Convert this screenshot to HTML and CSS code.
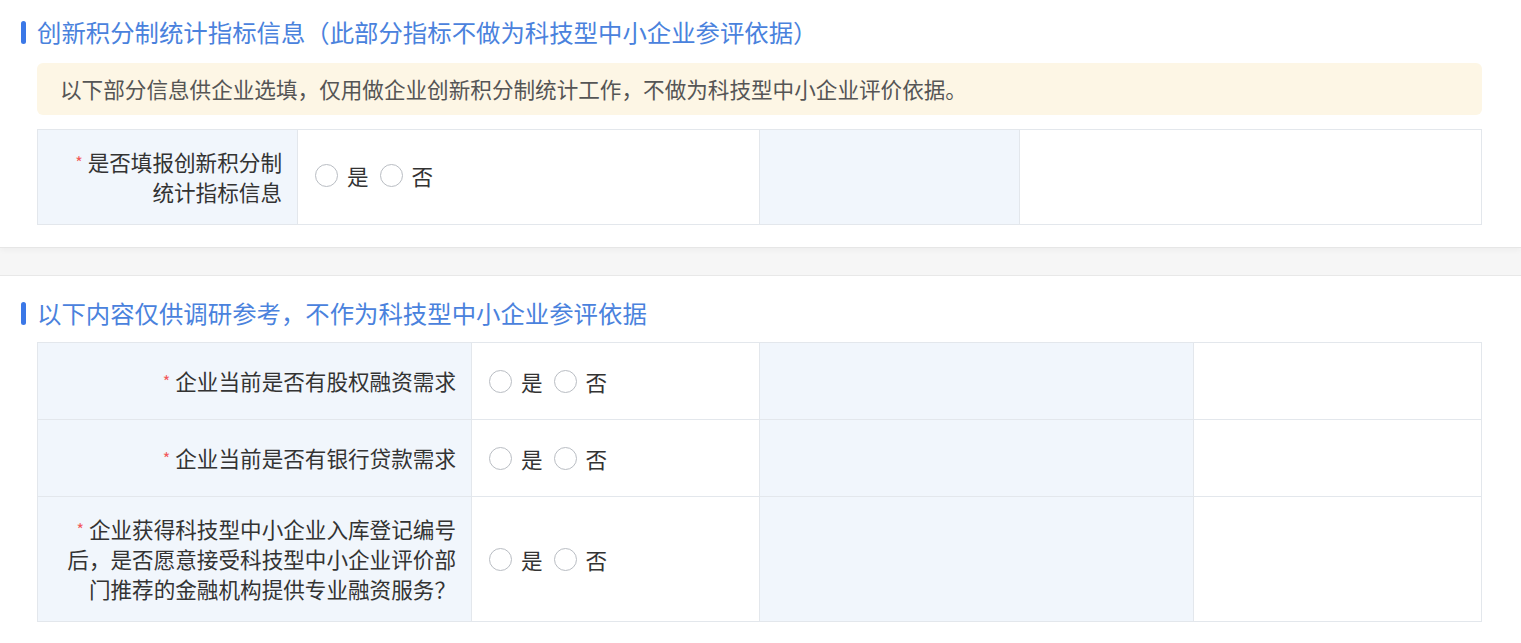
FILE: index.html
```html
<!DOCTYPE html>
<html lang="zh-CN">
<head>
    <meta charset="UTF-8">
    <meta name="viewport" content="width=device-width, initial-scale=1.0">
    <title>创新积分制统计指标信息</title>
    <link rel="stylesheet" href="styles.css">
</head>
<body>
    <div class="card card-first">
        <h2 class="section-title">创新积分制统计指标信息（此部分指标不做为科技型中小企业参评依据）</h2>
        <div class="notice">以下部分信息供企业选填，仅用做企业创新积分制统计工作，不做为科技型中小企业评价依据。</div>
        <table class="form-table table-narrow">
            <colgroup>
                <col class="col-label">
                <col class="col-value">
                <col class="col-label">
                <col>
            </colgroup>
            <tr class="row-tall">
                <td class="label"><span class="required">*</span>是否填报创新积分制<br>统计指标信息</td>
                <td class="value">
                    <div class="radio-group">
                        <label class="radio"><span class="radio-circle"></span>是</label>
                        <label class="radio"><span class="radio-circle"></span>否</label>
                    </div>
                </td>
                <td class="label"></td>
                <td class="value"></td>
            </tr>
        </table>
    </div>

    <div class="card card-second">
        <h2 class="section-title">以下内容仅供调研参考，不作为科技型中小企业参评依据</h2>
        <table class="form-table table-wide">
            <colgroup>
                <col class="col-label">
                <col class="col-value">
                <col class="col-label">
                <col>
            </colgroup>
            <tr class="row-normal">
                <td class="label"><span class="required">*</span>企业当前是否有股权融资需求</td>
                <td class="value">
                    <div class="radio-group">
                        <label class="radio"><span class="radio-circle"></span>是</label>
                        <label class="radio"><span class="radio-circle"></span>否</label>
                    </div>
                </td>
                <td class="label"></td>
                <td class="value"></td>
            </tr>
            <tr class="row-normal">
                <td class="label"><span class="required">*</span>企业当前是否有银行贷款需求</td>
                <td class="value">
                    <div class="radio-group">
                        <label class="radio"><span class="radio-circle"></span>是</label>
                        <label class="radio"><span class="radio-circle"></span>否</label>
                    </div>
                </td>
                <td class="label"></td>
                <td class="value"></td>
            </tr>
            <tr class="row-large">
                <td class="label"><span class="required">*</span>企业获得科技型中小企业入库登记编号后，是否愿意接受科技型中小企业评价部门推荐的金融机构提供专业融资服务？</td>
                <td class="value">
                    <div class="radio-group">
                        <label class="radio"><span class="radio-circle"></span>是</label>
                        <label class="radio"><span class="radio-circle"></span>否</label>
                    </div>
                </td>
                <td class="label"></td>
                <td class="value"></td>
            </tr>
        </table>
    </div>
</body>
</html>
```

FILE: styles.css
```css
* {
    margin: 0;
    padding: 0;
    box-sizing: border-box;
}

body {
    font-family: "Noto Sans CJK SC", "Liberation Sans", sans-serif;
    background-color: #f6f6f6;
    color: #333;
    font-size: 21.6px;
}

.card {
    background: #fff;
    padding: 0 39px 0 37px;
}

.card-first {
    padding-top: 16px;
    padding-bottom: 22px;
    border-bottom: 1px solid #e6e6e6;
    margin-bottom: 27px;
    box-shadow: 0 2px 6px rgba(0, 0, 0, 0.04);
}

.card-second {
    padding-top: 21px;
    border-top: 1px solid #e8e8e8;
    min-height: 400px;
}

.section-title {
    display: flex;
    align-items: center;
    gap: 11px;
    margin-left: -16px;
    font-size: 24.4px;
    font-weight: normal;
    line-height: 32px;
    color: #4a82dd;
}

.section-title::before {
    content: "";
    width: 5px;
    height: 23px;
    border-radius: 3px;
    background-color: #3b78e7;
}

.notice {
    margin-top: 15px;
    height: 52px;
    line-height: 52px;
    padding: 0 23px;
    border-radius: 6px;
    background-color: #fdf6e5;
    color: #555;
}

.form-table {
    width: 100%;
    border-collapse: collapse;
    table-layout: fixed;
}

.card-first .form-table {
    margin-top: 14px;
}

.card-second .form-table {
    margin-top: 13px;
}

.form-table td {
    border: 1px solid #e3e7ec;
    vertical-align: middle;
}

.table-narrow .col-label {
    width: 260px;
}

.table-narrow .col-value {
    width: 462px;
}

.table-wide .col-label {
    width: 434px;
}

.table-wide .col-value {
    width: 288px;
}

.row-tall {
    height: 95px;
}

.row-normal {
    height: 77px;
}

.row-large {
    height: 125px;
}

.label {
    background-color: #f1f6fc;
    text-align: right;
    padding: 0 15px 0 20px;
    line-height: 30px;
    color: #333;
}

.required {
    color: #f25a5a;
    font-size: 16px;
    margin-right: 5px;
    vertical-align: 2px;
}

.value {
    background: #fff;
    padding: 0 17px;
}

.row-tall .radio-group {
    margin-top: -4px;
}

.radio-group {
    display: flex;
    align-items: center;
    gap: 11px;
}

.radio {
    display: flex;
    align-items: center;
    gap: 9px;
    color: #333;
    cursor: pointer;
}

.radio-circle {
    width: 23px;
    height: 23px;
    border: 1.5px solid #b9bdc3;
    border-radius: 50%;
    background: #fff;
}
```
